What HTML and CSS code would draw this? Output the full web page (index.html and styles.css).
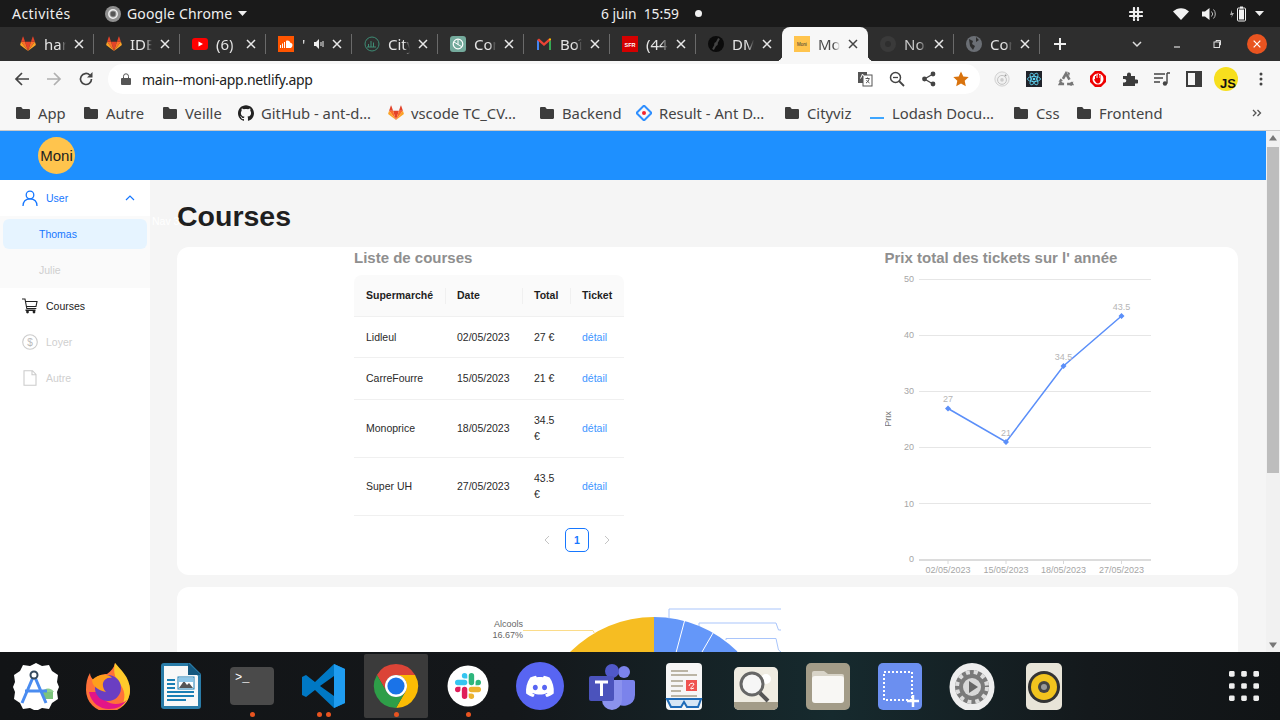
FILE: index.html
```html
<!DOCTYPE html>
<html lang="fr">
<head>
<meta charset="utf-8">
<title>Moni</title>
<link rel="stylesheet" href="styles.css">
</head>
<body>
<svg class="defs" aria-hidden="true">
  <symbol id="gitlab" viewBox="0 0 24 24">
    <path fill="#e24329" d="M12 22.5 16.4 8.5H7.6z"/>
    <path fill="#fc6d26" d="M12 22.5 7.6 8.5H1.6z"/>
    <path fill="#fc6d26" d="M12 22.5 16.4 8.5h6z"/>
    <path fill="#fca326" d="M1.6 8.5.3 12.7c-.1.4 0 .8.3 1L12 22.5z"/>
    <path fill="#fca326" d="M22.4 8.5l1.3 4.2c.1.4 0 .8-.3 1L12 22.5z"/>
    <path fill="#e24329" d="M1.6 8.5h6L5 1c-.1-.4-.7-.4-.8 0z"/>
    <path fill="#e24329" d="M22.4 8.5h-6L19 1c.1-.4.7-.4.8 0z"/>
  </symbol>
  <symbol id="folder" viewBox="0 0 16 16">
    <path fill="#3c3c3c" d="M1 3.2C1 2.5 1.5 2 2.2 2h4l1.6 2h6C14.5 4 15 4.5 15 5.2v7.6c0 .7-.5 1.2-1.2 1.2H2.2C1.500 14 1 13.500 1 12.800z"/>
  </symbol>
  <symbol id="x" viewBox="0 0 12 12">
    <path d="M2 2l8 8M10 2l-8 8" stroke="currentColor" stroke-width="1.500" fill="none"/>
  </symbol>
  <symbol id="github" viewBox="0 0 24 24">
    <path fill="#222" d="M12 .297c-6.63 0-12 5.373-12 12 0 5.303 3.438 9.8 8.205 11.385.6.113.82-.258.82-.577 0-.285-.01-1.04-.015-2.04-3.338.724-4.042-1.61-4.042-1.61C4.422 18.07 3.633 17.7 3.633 17.7c-1.087-.744.084-.729.084-.729 1.205.084 1.838 1.236 1.838 1.236 1.07 1.835 2.809 1.305 3.495.998.108-.776.417-1.305.76-1.605-2.665-.3-5.466-1.332-5.466-5.93 0-1.31.465-2.38 1.235-3.22-.135-.303-.54-1.523.105-3.176 0 0 1.005-.322 3.3 1.23.96-.267 1.98-.399 3-.405 1.02.006 2.04.138 3 .405 2.28-1.552 3.285-1.23 3.285-1.23.645 1.653.24 2.873.12 3.176.765.84 1.23 1.91 1.23 3.22 0 4.61-2.805 5.625-5.475 5.92.42.36.81 1.096.81 2.22 0 1.606-.015 2.896-.015 3.286 0 .315.21.69.825.57C20.565 22.092 24 17.592 24 12.297c0-6.627-5.373-12-12-12"/>
  </symbol>
  <symbol id="chrome" viewBox="0 0 24 24">
    <path fill="#db4437" d="M12 1A11 11 0 0 1 21.530 6.500H12A5.500 5.500 0 0 0 7.240 14.750L2.470 6.500A11 11 0 0 1 12 1z"/>
    <path fill="#fbbc04" d="M21.530 6.500A11 11 0 0 1 12 23L16.760 14.750A5.500 5.500 0 0 0 12 6.500z"/>
    <path fill="#2e9e48" d="M12 23A11 11 0 0 1 2.470 6.500L7.240 14.750A5.500 5.500 0 0 0 16.760 14.750z"/>
    <circle cx="12" cy="12" r="5.500" fill="#fff"/>
    <circle cx="12" cy="12" r="4.300" fill="#1a73e8"/>
  </symbol>
  <symbol id="slack" viewBox="0 0 24 24">
    <path fill="#e01e5a" d="M5.042 15.165a2.528 2.528 0 0 1-2.52 2.523A2.528 2.528 0 0 1 0 15.165a2.527 2.527 0 0 1 2.522-2.52h2.52v2.52zM6.313 15.165a2.527 2.527 0 0 1 2.521-2.52 2.527 2.527 0 0 1 2.521 2.52v6.313A2.528 2.528 0 0 1 8.834 24a2.528 2.528 0 0 1-2.521-2.522v-6.313z"/>
    <path fill="#36c5f0" d="M8.834 5.042a2.528 2.528 0 0 1-2.521-2.52A2.528 2.528 0 0 1 8.834 0a2.528 2.528 0 0 1 2.521 2.522v2.52H8.834zM8.834 6.313a2.528 2.528 0 0 1 2.521 2.521 2.528 2.528 0 0 1-2.521 2.521H2.522A2.528 2.528 0 0 1 0 8.834a2.528 2.528 0 0 1 2.522-2.521h6.312z"/>
    <path fill="#2eb67d" d="M18.956 8.834a2.528 2.528 0 0 1 2.522-2.521A2.528 2.528 0 0 1 24 8.834a2.528 2.528 0 0 1-2.522 2.521h-2.522V8.834zM17.688 8.834a2.528 2.528 0 0 1-2.523 2.521 2.527 2.527 0 0 1-2.52-2.521V2.522A2.527 2.527 0 0 1 15.165 0a2.528 2.528 0 0 1 2.523 2.522v6.312z"/>
    <path fill="#ecb22e" d="M15.165 18.956a2.528 2.528 0 0 1 2.523 2.522A2.528 2.528 0 0 1 15.165 24a2.527 2.527 0 0 1-2.52-2.522v-2.522h2.52zM15.165 17.688a2.527 2.527 0 0 1-2.52-2.523 2.526 2.526 0 0 1 2.52-2.52h6.313A2.527 2.527 0 0 1 24 15.165a2.528 2.528 0 0 1-2.522 2.523h-6.313z"/>
  </symbol>
</svg>

<div class="screen">
  <header class="topbar">
    <div class="top-left">
      <span class="activities">Activités</span>
      <span class="appmenu">
        <svg class="ic16" viewBox="0 0 16 16"><circle cx="8" cy="8" r="8" fill="#8f8f8f"/><circle cx="8" cy="8" r="4.200" fill="none" stroke="#eee" stroke-width="1.500"/><circle cx="8" cy="8" r="2.400" fill="#555"/></svg>
        <span class="appname">Google Chrome</span>
        <svg class="caret" viewBox="0 0 9 5"><path d="M0 0h9L4.500 5z" fill="#eee"/></svg>
      </span>
    </div>
    <div class="clock"><span>6 juin</span><span>15:59</span><i class="dot"></i></div>
    <div class="status">
      <svg class="slack-w" viewBox="0 0 14 14"><path d="M5 1v12M9 1v12M1 5h12M1 9h12" stroke="#eee" stroke-width="2.200" stroke-linecap="round" stroke-dasharray="4 1.500" fill="none"/></svg>
      <svg class="wifi" viewBox="0 0 16 12"><path d="M0 3.500C4.500-1 11.500-1 16 3.500L8 12z" fill="#f2f2f2"/></svg>
      <svg class="vol" viewBox="0 0 16 14"><path d="M1 4.500h3L8.500 1v12L4 9.500H1z" fill="#f2f2f2"/><path d="M10.500 4.500a3.500 3.500 0 0 1 0 5M12.500 2.500a6.500 6.500 0 0 1 0 9" stroke="#bbb" fill="none"/></svg>
      <svg class="batt" viewBox="0 0 18 16"><path d="M3 4 1 9h2L2 12l3-5H3z" fill="#aaa"/><rect x="8.500" y="2" width="8" height="13" rx="1" fill="none" stroke="#f2f2f2"/><rect x="11" y="0.500" width="3" height="2" fill="#f2f2f2"/><rect x="10" y="3.500" width="5" height="10" fill="#f2f2f2"/></svg>
      <svg class="caret" viewBox="0 0 9 5"><path d="M0 0h9L4.500 5z" fill="#eee"/></svg>
    </div>
  </header>

  <nav class="tabstrip">
    <div class="tab"><svg class="ic16"><use href="#gitlab"/></svg><span class="tab-title">har</span><svg class="tab-x"><use href="#x"/></svg></div>
    <div class="tab"><svg class="ic16"><use href="#gitlab"/></svg><span class="tab-title">IDE</span><svg class="tab-x"><use href="#x"/></svg></div>
    <div class="tab"><svg class="ic16" viewBox="0 0 16 16"><rect y="2" width="16" height="12" rx="3" fill="#f00"/><path d="M6.500 5.500v5L11 8z" fill="#fff"/></svg><span class="tab-title">(6) A</span><svg class="tab-x"><use href="#x"/></svg></div>
    <div class="tab"><svg class="ic16" viewBox="0 0 16 16"><rect width="16" height="16" fill="#f50"/><path d="M2 12V9h1v3zM4 12V7.500h1V12zM6 12V6h1v6zM8 12V5c2-1 4 0 4.500 2 2-.5 3 3 .5 5z" fill="#fff"/></svg><span class="tab-title tab-short">'</span><svg class="tab-audio" viewBox="0 0 12 12"><path d="M0 4h2l3-3v10L2 8H0z" fill="#eee"/><path d="M7 4v4M9 3v6" stroke="#eee"/></svg><svg class="tab-x"><use href="#x"/></svg></div>
    <div class="tab"><svg class="ic16" viewBox="0 0 16 16"><circle cx="8" cy="8" r="7" fill="none" stroke="#3e8c75"/><path d="M4.500 11V8M7 11V5M9.500 11V6.500M12 11H3" stroke="#3e8c75" fill="none"/></svg><span class="tab-title">City</span><svg class="tab-x"><use href="#x"/></svg></div>
    <div class="tab"><svg class="ic16" viewBox="0 0 16 16"><rect width="16" height="16" rx="3" fill="#74aa9c"/><circle cx="8" cy="8" r="4.800" fill="none" stroke="#fff" stroke-width="1.200"/><path d="M8 3.500v5l3.500 2M4 6l4 2.500" stroke="#fff" fill="none"/></svg><span class="tab-title">Con</span><svg class="tab-x"><use href="#x"/></svg></div>
    <div class="tab"><svg class="ic16" viewBox="0 0 16 16"><path d="M1 14V4l2 .5V14z" fill="#4285f4"/><path d="M13 14V4.500L15 4v10z" fill="#34a853"/><path d="M1 4l2-1.500L8 7l5-4.500L15 4l-7 6z" fill="#ea4335"/><path d="M13 4.500 15 4V2.500L13 2.500z" fill="#fbbc04"/></svg><span class="tab-title">Boî</span><svg class="tab-x"><use href="#x"/></svg></div>
    <div class="tab"><svg class="ic16" viewBox="0 0 16 16"><rect width="16" height="16" fill="#d40000"/><text class="sfr" x="8" y="10.500" text-anchor="middle">SFR</text></svg><span class="tab-title">(44</span><svg class="tab-x"><use href="#x"/></svg></div>
    <div class="tab tab-preactive"><svg class="ic16" viewBox="0 0 16 16"><circle cx="8" cy="8" r="8" fill="#0b0b0b"/><path d="M11 2.500 5 13.500" stroke="#444" stroke-width="2"/><circle cx="8" cy="8" r="1.800" fill="#444"/></svg><span class="tab-title">DM</span><svg class="tab-x"><use href="#x"/></svg></div>
    <div class="tab tab-active"><svg class="ic16" viewBox="0 0 16 16"><rect width="16" height="16" fill="#ffc44d"/><text class="moni-fav" x="8" y="9.500" text-anchor="middle">Moni</text></svg><span class="tab-title">Mo</span><svg class="tab-x"><use href="#x"/></svg></div>
    <div class="tab"><svg class="ic16" viewBox="0 0 16 16"><circle cx="8" cy="8" r="8" fill="#3a3a3a"/><circle cx="8" cy="8" r="3" fill="#2e2e2e"/></svg><span class="tab-title tab-dim">Nor</span><svg class="tab-x"><use href="#x"/></svg></div>
    <div class="tab"><svg class="ic16" viewBox="0 0 16 16"><circle cx="8" cy="8" r="8" fill="#6b6f75"/><path d="M3 3l4 2-1 3 3 2-2 4-3-4zM10 1l3 3-3 2z" fill="#2e2e2e"/></svg><span class="tab-title">Con</span><svg class="tab-x"><use href="#x"/></svg></div>
    <svg class="newtab" viewBox="0 0 14 14"><path d="M7 1v12M1 7h12" stroke="#eee" stroke-width="2" fill="none"/></svg>
    <div class="winctl">
      <svg class="win-ic" viewBox="0 0 12 12"><path d="M2 4l4 4 4-4" stroke="#ddd" stroke-width="1.500" fill="none"/></svg>
      <svg class="win-ic" viewBox="0 0 12 12"><path d="M3 9h6" stroke="#ddd" stroke-width="1.200" fill="none"/></svg>
      <svg class="win-ic" viewBox="0 0 12 12"><rect x="3" y="4" width="5.500" height="5.500" stroke="#ddd" fill="none"/><path d="M5 4V2.500h4.500V7H8.500" stroke="#ddd" fill="none"/></svg>
      <span class="win-close"><svg class="win-x"><use href="#x"/></svg></span>
    </div>
  </nav>

  <div class="toolbar">
    <svg class="tool" viewBox="0 0 16 16"><path d="M15 8H2M8 2 2 8l6 6" stroke="#444" stroke-width="1.700" fill="none"/></svg>
    <svg class="tool" viewBox="0 0 16 16"><path d="M1 8h13M8 2l6 6-6 6" stroke="#b0b0b0" stroke-width="1.700" fill="none"/></svg>
    <svg class="tool" viewBox="0 0 16 16"><path d="M13.500 8A5.500 5.500 0 1 1 11.800 4" stroke="#444" stroke-width="1.700" fill="none"/><path d="M14.500 1v5.500H9z" fill="#444"/></svg>
    <div class="omnibox">
      <svg class="lock" viewBox="0 0 10 12"><path d="M2.500 5V3.300a2.500 2.500 0 0 1 5 0V5" stroke="#555" fill="none"/><rect y="5" width="10" height="7" rx="1" fill="#555"/></svg>
      <span class="url">main--moni-app.netlify.app</span>
      <div class="omni-icons">
        <svg class="tool" viewBox="0 0 16 16"><rect x="1" y="1" width="9" height="11" fill="#555"/><rect x="6" y="4" width="9" height="11" fill="#fff" stroke="#555"/><path d="M8.500 7.500h4M10.500 6.500v1M9 12c2-1 3-3 3-4.500M9.500 9c.5 1 2 2.500 3 3" stroke="#555" fill="none"/><path d="M3.500 7.500 5.500 3l1 2" stroke="#fff" fill="none"/></svg>
        <svg class="tool" viewBox="0 0 16 16"><circle cx="6.500" cy="6.500" r="5" stroke="#444" stroke-width="1.500" fill="none"/><path d="M10 10l5 5" stroke="#444" stroke-width="1.800"/><path d="M4 6.500h5" stroke="#444" stroke-width="1.300"/></svg>
        <svg class="tool" viewBox="0 0 16 16"><circle cx="12" cy="3" r="2.400" fill="#444"/><circle cx="3.500" cy="8" r="2.400" fill="#444"/><circle cx="12" cy="13" r="2.400" fill="#444"/><path d="M12 3 3.500 8l8.500 5" stroke="#444" stroke-width="1.300" fill="none"/></svg>
        <svg class="tool star" viewBox="0 0 16 16"><path d="M8 .5l2.300 5 5.400.6-4 3.700 1.100 5.400L8 12.500l-4.800 2.700 1.100-5.400-4-3.700 5.400-.6z" fill="#d9730d"/></svg>
      </div>
    </div>
    <div class="ext-icons">
      <svg class="tool" viewBox="0 0 18 18"><circle cx="9" cy="9" r="8" fill="#f1f1f1" stroke="#ccc"/><circle cx="9" cy="10" r="5" fill="none" stroke="#bbb"/><circle cx="9" cy="10" r="2" fill="#ccc"/><circle cx="13" cy="5" r="1" fill="#999"/></svg>
      <svg class="tool" viewBox="0 0 16 16"><rect width="16" height="16" fill="#20232a"/><g fill="none" stroke="#61dafb" stroke-width=".8"><ellipse cx="8" cy="8" rx="6.500" ry="2.600"/><ellipse cx="8" cy="8" rx="6.500" ry="2.600" transform="rotate(60 8 8)"/><ellipse cx="8" cy="8" rx="6.500" ry="2.600" transform="rotate(120 8 8)"/></g><circle cx="8" cy="8" r="1.300" fill="#61dafb"/></svg>
      <svg class="tool" viewBox="0 0 16 16"><path d="M8 2.500 14 13H2z" fill="none" stroke="#777" stroke-width="2.600" stroke-dasharray="7 3"/><path d="M9 .5l3 1.500-1 3.500zM15.500 10.500l-2 4.500-3-1.500zM.5 11l2-3.500 2.500 2z" fill="#777"/></svg>
      <svg class="tool" viewBox="0 0 16 16"><path d="M5 0h6l5 5v6l-5 5H5l-5-5V5z" fill="#e00"/><circle cx="8" cy="8" r="5.500" fill="#fff"/><path d="M5 8V5h1v2h.5V3.500h1V7H8V3h1v4h.5V4h1v5.500c0 1.500-1 3-2.500 3S5.500 11 4 8.500z" fill="#e00"/></svg>
      <svg class="tool" viewBox="0 0 16 16"><path d="M1 5h4V3.500a2 2 0 0 1 4 0V5h4v3.500h1.500a2 2 0 0 1 0 4H13V15H1v-3.500h1.500a1.800 1.800 0 0 0 0-3.600H1z" fill="#3c3c3c"/></svg>
      <svg class="tool" viewBox="0 0 16 16"><path d="M0 3h11M0 7h9M0 11h6" stroke="#444" stroke-width="1.400"/><path d="M13 2v10.500M13 2h3" stroke="#444" stroke-width="1.400" fill="none"/><circle cx="11" cy="12.500" r="2.200" fill="#444"/></svg>
      <svg class="tool" viewBox="0 0 16 16"><path d="M1 1h14v14H1z" fill="none" stroke="#3c3c3c" stroke-width="2"/><rect x="9" y="2" width="5" height="12" fill="#3c3c3c"/></svg>
      <span class="avatar">JS</span>
      <svg class="tool" viewBox="0 0 16 16"><circle cx="8" cy="3" r="1.500" fill="#444"/><circle cx="8" cy="8" r="1.500" fill="#444"/><circle cx="8" cy="13" r="1.500" fill="#444"/></svg>
    </div>
  </div>

  <div class="bookmarks">
    <span class="bm"><svg class="ic16"><use href="#folder"/></svg>App</span>
    <span class="bm"><svg class="ic16"><use href="#folder"/></svg>Autre</span>
    <span class="bm"><svg class="ic16"><use href="#folder"/></svg>Veille</span>
    <span class="bm"><svg class="ic16"><use href="#github"/></svg>GitHub - ant-d…</span>
    <span class="bm"><svg class="ic16"><use href="#gitlab"/></svg>vscode TC_CV…</span>
    <span class="bm"><svg class="ic16"><use href="#folder"/></svg>Backend</span>
    <span class="bm"><svg class="ic16" viewBox="0 0 16 16"><path d="M8 .5 15.500 8 8 15.500.5 8z" fill="none" stroke="#2f8fff" stroke-width="2"/><circle cx="8" cy="8" r="2" fill="#f5222d"/></svg>Result - Ant D…</span>
    <span class="bm"><svg class="ic16"><use href="#folder"/></svg>Cityviz</span>
    <span class="bm"><svg class="ic16" viewBox="0 0 16 16"><path d="M1 13h14" stroke="#3ea6ff" stroke-width="2"/></svg>Lodash Docu…</span>
    <span class="bm"><svg class="ic16"><use href="#folder"/></svg>Css</span>
    <span class="bm"><svg class="ic16"><use href="#folder"/></svg>Frontend</span>
    <svg class="bm-more" viewBox="0 0 10 10"><path d="M1 2l3 3-3 3M5.500 2l3 3-3 3" stroke="#555" stroke-width="1.300" fill="none"/></svg>
  </div>

  <div class="page">
    <div class="app">
      <div class="app-header"><span class="logo">Moni</span></div>
      <div class="app-body">
        <aside class="sider">
          <div class="menu-item menu-open">
            <svg class="menu-ic" viewBox="0 0 16 16"><circle cx="8" cy="5" r="3.800" fill="none" stroke="#1677ff" stroke-width="1.300"/><path d="M1 16c0-4.500 2.500-7.200 7-7.200s7 2.700 7 7.200" fill="none" stroke="#1677ff" stroke-width="1.300"/></svg>
            <span>User</span>
            <svg class="chev" viewBox="0 0 10 6"><path d="M1 5l4-4 4 4" fill="none" stroke="#1677ff" stroke-width="1.200"/></svg>
          </div>
          <div class="submenu">
            <div class="sub-item sub-active">Thomas</div>
            <div class="sub-item sub-muted">Julie</div>
          </div>
          <div class="menu-item">
            <svg class="menu-ic" viewBox="0 0 16 16"><path d="M0 1h3l1.800 9.500h9.500" fill="none" stroke="#222" stroke-width="1.100"/><path d="M3.500 3.500H15l-1 5H4.500" fill="none" stroke="#222" stroke-width="1.100"/><rect x="3.500" y="11.500" width="10" height="1.500" fill="#222"/><circle cx="5.500" cy="14" r="1.400" fill="#222"/><circle cx="12" cy="14" r="1.400" fill="#222"/></svg>
            <span>Courses</span>
          </div>
          <div class="menu-item menu-muted">
            <svg class="menu-ic" viewBox="0 0 16 16"><circle cx="8" cy="8" r="7.300" fill="none" stroke="#ccc" stroke-width="1.100"/><text class="dollar" x="8" y="11.500" text-anchor="middle">$</text></svg>
            <span>Loyer</span>
          </div>
          <div class="menu-item menu-muted">
            <svg class="menu-ic" viewBox="0 0 16 16"><path d="M2 .7h8.500L14 4.500v10.800H2zM10 .7v4h4" fill="none" stroke="#ccc" stroke-width="1.100"/></svg>
            <span>Autre</span>
          </div>
        </aside>
        <main class="main">
          <span class="ghost">Nav 3</span>
          <h1 class="page-title">Courses</h1>
          <section class="card card-top">
            <div class="col">
              <h2 class="col-title">Liste de courses</h2>
              <table class="tbl">
                <thead>
                  <tr><th class="c1">Supermarché</th><th class="c2">Date</th><th class="c3">Total</th><th class="c4">Ticket</th></tr>
                </thead>
                <tbody>
                  <tr><td>Lidleul</td><td>02/05/2023</td><td>27 €</td><td><a class="lnk">détail</a></td></tr>
                  <tr><td>CarreFourre</td><td>15/05/2023</td><td>21 €</td><td><a class="lnk">détail</a></td></tr>
                  <tr><td>Monoprice</td><td>18/05/2023</td><td>34.5 €</td><td><a class="lnk">détail</a></td></tr>
                  <tr><td>Super UH</td><td>27/05/2023</td><td>43.5 €</td><td><a class="lnk">détail</a></td></tr>
                </tbody>
              </table>
              <div class="pager">
                <svg class="pg-arrow" viewBox="0 0 8 10"><path d="M6 1 2 5l4 4" fill="none" stroke="#c4c4c4"/></svg>
                <span class="pg-num">1</span>
                <svg class="pg-arrow" viewBox="0 0 8 10"><path d="M2 1l4 4-4 4" fill="none" stroke="#c4c4c4"/></svg>
              </div>
            </div>
            <div class="col">
              <h2 class="col-title">Prix total des tickets sur l' année</h2>
              <svg class="chart" viewBox="884 275 270 300">
                <g class="grid">
                  <path d="M918 279.500h232M918 335.500h232M918 391.500h232M918 447.500h232M918 503.500h232"/>
                </g>
                <path class="axis" d="M918 560h232"/>
                <path class="ticks" d="M947 560v4M1005 560v4M1062.500 560v4M1120.500 560v4"/>
                <g class="ylab" text-anchor="end">
                  <text x="913" y="282">50</text><text x="913" y="338">40</text><text x="913" y="394">30</text><text x="913" y="450">20</text><text x="913" y="507">10</text><text x="913" y="562">0</text>
                </g>
                <g class="ylab" text-anchor="middle">
                  <text x="947" y="573">02/05/2023</text><text x="1005" y="573">15/05/2023</text><text x="1062.500" y="573">18/05/2023</text><text x="1120.500" y="573">27/05/2023</text>
                </g>
                <text class="axis-name" transform="translate(890 419) rotate(-90)" text-anchor="middle">Prix</text>
                <polyline class="line" points="947,408.500 1005,442 1062.500,366 1120.500,316"/>
                <path class="mark" d="M947 405.500l3 3-3 3-3-3zM1005 439l3 3-3 3-3-3zM1062.500 363l3 3-3 3-3-3zM1120.500 313l3 3-3 3-3-3z"/>
                <g class="dlab" text-anchor="middle">
                  <text x="947" y="402">27</text><text x="1005" y="436">21</text><text x="1062.500" y="360">34.5</text><text x="1120.500" y="310">43.5</text>
                </g>
              </svg>
            </div>
          </section>
          <section class="card card-pie">
            <svg class="pie" viewBox="177 587 1061 200">
              <path class="pie-y" d="M654 735V617A118 118 0 0 0 536 735z"/>
              <path class="pie-b" d="M654 735V617A118 118 0 0 1 772 735z"/>
              <path class="pie-sep" d="M654 735 684.500 621M654 735 713 633M654 735 737.500 651.500"/>
              <path class="lead-y" d="M523 630.500h70l1.500 3"/>
              <path class="lead-b" d="M669 618.500V609H781M699 626V623H776L778.500 630H781M726 640V638.500H776L778.500 650 781 652"/>
              <g class="pie-lab" text-anchor="end"><text x="523" y="627">Alcools</text><text x="523" y="638">16.67%</text></g>
            </svg>
          </section>
        </main>
      </div>
    </div>
    <div class="scrollbar">
      <svg class="sb-arrow" viewBox="0 0 14 16"><path d="M3 9.500 7 4l4 5.500z" fill="#777"/></svg>
      <div class="sb-thumb"></div>
      <svg class="sb-arrow sb-down" viewBox="0 0 14 16"><path d="M3 6.500 7 12l4-5.500z" fill="#777"/></svg>
    </div>
  </div>

  <footer class="dock">
    <div class="dock-item">
      <svg class="dock-ic" viewBox="0 0 48 48"><path d="M24 1l6 3 7-1 3 6 6 4-1 7 2 5-2 5 1 7-6 4-3 6-7-1-6 3-6-3-7 1-3-6-6-4 1-7-2-5 2-5-1-7 6-4 3-6 7 1z" fill="#fff"/><path d="M30 30a7 7 0 0 1 12 0z" fill="#8ecf8e"/><rect x="31" y="30" width="10" height="7" fill="#7cc47c"/><path d="M22 13 10 41M22 13l12 28M13 29h22" stroke="#4a8cf0" stroke-width="3" fill="none"/><circle cx="22" cy="13" r="3.500" fill="#fff" stroke="#34495e" stroke-width="2"/></svg>
    </div>
    <div class="dock-item">
      <svg class="dock-ic" viewBox="0 0 48 48"><path d="M31 1c4 5 2 8 6 11 6 5 9 11 9 16a22 22 0 0 1-44 0c0-7 1-12 4-17 0 3 2 6 4 7 3-4 8-6 13-6 4-3 7-6 8-11z" fill="#ff7139"/><path d="M31 1c5 6 15 14 15 27 0 8-4 14-9 17 5-7 5-18-3-25-3-4-5-11-3-19z" fill="#ffca2b"/><path d="M5 30c2 11 11 17 20 17 8 0 14-3 18-9-8 7-24 5-27-8z" fill="#e31587"/><circle cx="24" cy="26" r="13" fill="#6a3ec2"/><path d="M8 18c6-6 16-7 20-2-4-1-8 1-9 5-1 5 3 9 3 9-8-2-14-6-14-12z" fill="#ff9f1c"/></svg>
    </div>
    <div class="dock-item">
      <svg class="dock-ic" viewBox="0 0 48 48"><path d="M5 4a3 3 0 0 1 3-3h26l11 11v32a3 3 0 0 1-3 3H8a3 3 0 0 1-3-3z" fill="#2a7ca8"/><path d="M8 4h24l10 10v30H8z" fill="#f8f8f8"/><path d="M32 1l13 12H32z" fill="#14587f"/><g fill="#1a7fb5"><rect x="11" y="17" width="8" height="2"/><rect x="11" y="21" width="8" height="2"/><rect x="11" y="25" width="8" height="2"/><rect x="11" y="29" width="27" height="2"/><rect x="11" y="33" width="27" height="2"/><rect x="11" y="37" width="19" height="2"/></g><rect x="22" y="15" width="16" height="12" fill="#fff" stroke="#1a7fb5"/><path d="M23 26l5-7 3 4 2-2 4 5z" fill="#555"/><rect x="23" y="16" width="14" height="4" fill="#8ec7e8"/></svg>
    </div>
    <div class="dock-item">
      <svg class="dock-ic" viewBox="0 0 48 48"><rect x="2" y="5" width="44" height="38" rx="4" fill="#4a4a4a"/><text class="term" x="7" y="19">&gt;_</text></svg>
      <i class="run run-1"></i>
    </div>
    <div class="dock-item">
      <svg class="dock-ic" viewBox="0 0 48 48"><path d="M34 2 45 7v34l-11 5-19-18-9 7-4-2V15l4-2 9 7z" fill="#0078c4"/><path d="M34 2 45 7v34l-11 5z" fill="#1f9cf0"/><path d="M34 14 20 24l14 10z" fill="#111416"/></svg>
      <i class="run run-2a"></i><i class="run run-2b"></i>
    </div>
    <div class="dock-item dock-active">
      <svg class="dock-ic"><use href="#chrome"/></svg>
      <i class="run run-1"></i>
    </div>
    <div class="dock-item">
      <svg class="dock-ic" viewBox="0 0 48 48"><circle cx="24" cy="24" r="20.500" fill="#fff"/><svg x="11" y="11" width="26" height="26"><use href="#slack"/></svg></svg>
      <i class="run run-1"></i>
    </div>
    <div class="dock-item">
      <svg class="dock-ic" viewBox="0 0 48 48"><circle cx="24" cy="24" r="24" fill="#5865f2"/><g transform="translate(10 10.500) scale(1.160)"><path fill="#fff" d="M20.317 4.370a19.790 19.790 0 0 0-4.885-1.515.074.074 0 0 0-.079.037c-.211.375-.445.865-.608 1.250-1.845-.276-3.680-.276-5.487 0-.164-.393-.406-.874-.618-1.250a.077.077 0 0 0-.079-.037 19.740 19.740 0 0 0-4.885 1.515.070.070 0 0 0-.032.028C.533 9.046-.319 13.580.099 18.058a.082.082 0 0 0 .031.056c2.053 1.508 4.041 2.423 5.993 3.030a.078.078 0 0 0 .084-.028c.462-.630.873-1.295 1.226-1.994a.076.076 0 0 0-.042-.106c-.653-.248-1.274-.550-1.872-.892a.077.077 0 0 1-.008-.128c.126-.094.252-.192.372-.291a.074.074 0 0 1 .078-.011c3.928 1.793 8.180 1.793 12.061 0a.074.074 0 0 1 .079.010c.120.099.246.198.373.292a.077.077 0 0 1-.007.128 12.300 12.300 0 0 1-1.873.891.077.077 0 0 0-.041.107c.360.698.772 1.363 1.225 1.993a.076.076 0 0 0 .084.029c1.961-.607 3.950-1.522 6.002-3.029a.077.077 0 0 0 .031-.055c.500-5.177-.838-9.674-3.548-13.660a.061.061 0 0 0-.031-.029zM8.020 15.331c-1.183 0-2.157-1.086-2.157-2.419s.956-2.419 2.157-2.419c1.211 0 2.176 1.095 2.157 2.419 0 1.333-.956 2.419-2.157 2.419zm7.975 0c-1.183 0-2.157-1.086-2.157-2.419s.955-2.419 2.157-2.419c1.211 0 2.176 1.095 2.157 2.419 0 1.333-.946 2.419-2.157 2.419z"/></g></svg>
    </div>
    <div class="dock-item">
      <svg class="dock-ic" viewBox="0 0 48 48"><circle cx="36" cy="10" r="6" fill="#7b83eb"/><circle cx="24" cy="9" r="7" fill="#5059c9"/><path d="M27 18h18a2 2 0 0 1 2 2v13a11 11 0 0 1-20 6z" fill="#7b83eb"/><path d="M14 18h20v20a10 10 0 0 1-20 0z" fill="#8b92ee"/><rect x="1" y="14" width="25" height="25" rx="2" fill="#4b53bc"/><path d="M7 20h13M13.500 20v14" stroke="#fff" stroke-width="3" fill="none"/></svg>
    </div>
    <div class="dock-item">
      <svg class="dock-ic" viewBox="0 0 48 48"><rect x="6" y="1" width="36" height="47" rx="4" fill="#f6f6f6"/><path d="M11 9h17M11 13h26M11 19h12M11 24h12M11 29h10M11 34h26" stroke="#bbb5a5" stroke-width="2"/><rect x="26" y="18" width="11" height="11" fill="#ef5350"/><path d="M29 24a3 3 0 0 1 5-2c-1 3-4 3-3 5l3-1" stroke="#fff" fill="none"/><path d="M7 37h34l-3 8h-11l-3-5-3 5H11z" fill="#d6e6f5" stroke="#1e6bb8" stroke-width="2"/></svg>
    </div>
    <div class="dock-item">
      <svg class="dock-ic" viewBox="0 0 48 48"><rect x="2" y="5" width="44" height="43" rx="5" fill="#efece2"/><path d="M2 40h44v3a5 5 0 0 1-5 5H7a5 5 0 0 1-5-5z" fill="#a39c88"/><circle cx="34" cy="17" r="5" fill="#fff"/><circle cx="20" cy="22" r="11" fill="#f6f6f6" stroke="#666" stroke-width="3"/><path d="M28 31l8 8" stroke="#555" stroke-width="4"/></svg>
    </div>
    <div class="dock-item">
      <svg class="dock-ic" viewBox="0 0 48 48"><rect x="2" y="1" width="44" height="47" rx="5" fill="#a39c88"/><path d="M8 11a2 2 0 0 1 2-2h10l4 3h14a2 2 0 0 1 2 2v4H8z" fill="#d8d4c8"/><rect x="8" y="14" width="32" height="27" rx="3" fill="#f8f7f4"/></svg>
    </div>
    <div class="dock-item">
      <svg class="dock-ic" viewBox="0 0 48 48"><rect x="2" y="1" width="44" height="47" rx="5" fill="#6b8ff0"/><rect x="8" y="10" width="28" height="28" fill="none" stroke="#fff" stroke-width="2" stroke-dasharray="2 2"/><path d="M37 33v12M31 39h12" stroke="#fff" stroke-width="2.500"/></svg>
    </div>
    <div class="dock-item">
      <svg class="dock-ic" viewBox="0 0 48 48"><ellipse cx="24" cy="25" rx="22.500" ry="24" fill="#eee"/><circle cx="24" cy="25" r="17" fill="#7a7a7a"/><circle cx="24" cy="25" r="15" fill="none" stroke="#ddd" stroke-width="4" stroke-dasharray="4 4"/><circle cx="24" cy="25" r="9" fill="#d8d8d8"/><path d="M21 19v12l9-6z" fill="#666"/></svg>
    </div>
    <div class="dock-item">
      <svg class="dock-ic" viewBox="0 0 48 48"><rect x="6" y="1" width="36" height="47" rx="5" fill="#e8e4d8"/><circle cx="24" cy="25" r="16" fill="#333"/><circle cx="24" cy="25" r="13" fill="#f2c41e"/><circle cx="24" cy="25" r="6" fill="#444"/><circle cx="24" cy="25" r="3" fill="#999"/></svg>
    </div>
    <svg class="apps-grid" viewBox="0 0 32 32"><g fill="#eee"><rect y="0" width="6" height="6" rx="1.500"/><rect x="13" width="6" height="6" rx="1.500"/><rect x="26" width="6" height="6" rx="1.500"/><rect y="13" width="6" height="6" rx="1.500"/><rect x="13" y="13" width="6" height="6" rx="1.500"/><rect x="26" y="13" width="6" height="6" rx="1.500"/><rect y="26" width="6" height="6" rx="1.500"/><rect x="13" y="26" width="6" height="6" rx="1.500"/><rect x="26" y="26" width="6" height="6" rx="1.500"/></g></svg>
  </footer>
</div>
</body>
</html>
```

FILE: styles.css
```css
* { box-sizing: border-box; }
html, body { margin: 0; padding: 0; height: 100%; overflow: hidden; }
body { font-family: "Liberation Sans", Arial, sans-serif; background: #111; }
.defs { position: absolute; width: 0; height: 0; }
.screen { width: 1280px; height: 720px; display: flex; flex-direction: column; overflow: hidden; }
.ic16 { width: 16px; height: 16px; flex: none; display: block; }

/* GNOME bar */
.topbar { height: 27px; flex: none; background: #1a1a1a; color: #f0f0f0; display: flex; align-items: center; font: 14px "Noto Sans", sans-serif; }
.top-left { width: 601px; flex: none; display: flex; align-items: center; padding-left: 12px; }
.activities { width: 93px; letter-spacing: .45px; }
.appname { letter-spacing: .15px; }
.appmenu { display: flex; align-items: center; gap: 6px; }
.caret { width: 9px; height: 5px; display: block; }
.clock { display: flex; align-items: center; gap: 7px; font-size: 13.800px; }
.dot { width: 7px; height: 7px; border-radius: 50%; background: #f2f2f2; margin-left: 9px; }
.status { margin-left: auto; display: flex; align-items: center; padding-right: 16px; }
.slack-w { width: 14px; height: 14px; margin-right: 30px; }
.wifi { width: 16px; height: 12px; margin-right: 12px; }
.vol { width: 16px; height: 14px; margin-right: 12px; }
.batt { width: 18px; height: 16px; margin-right: 8px; }

/* tabs */
.tabstrip { height: 34px; flex: none; background: #2e2e2e; display: flex; align-items: center; padding-left: 8px; color: #e4e4e4; font: 15px "Noto Sans", sans-serif; }
.tab { position: relative; width: 86px; height: 34px; flex: none; display: flex; align-items: center; padding-left: 12px; }
.tab::after { content: ""; position: absolute; right: 0; top: 7px; height: 20px; width: 1px; background: #6a6a6a; }
.tab-title { width: 22px; margin-left: 8px; overflow: hidden; white-space: nowrap; flex: none; -webkit-mask-image: linear-gradient(90deg, #000 70%, transparent); mask-image: linear-gradient(90deg, #000 70%, transparent); }
.tab-short { width: 6px; }
.tab-dim { color: #c8c8c8; }
.tab-audio { width: 12px; height: 12px; margin-left: 6px; flex: none; }
.tab-x { width: 12px; height: 12px; position: absolute; left: 65px; top: 11px; color: #e8e8e8; }
.tab-active { background: #f7f7f7; color: #4a4a4a; border-radius: 8px 8px 0 0; }
.tab-active .tab-x { color: #444; }
.tab-preactive::after { display: none; }
.tab-active::before { content: ""; position: absolute; left: -6px; bottom: 0; width: 6px; height: 6px; background: radial-gradient(circle at 0 0, transparent 6px, #f7f7f7 6.500px); }
.tab-active::after { right: -6px; left: auto; top: auto; bottom: 0; width: 6px; height: 6px; background: radial-gradient(circle at 100% 0, transparent 6px, #f7f7f7 6.500px); }
.moni-fav { font: 4.500px "Liberation Sans", sans-serif; fill: #333; }
.sfr { font: bold 5.500px "Liberation Sans", sans-serif; fill: #fff; }
.newtab { width: 14px; height: 14px; margin-left: 13px; flex: none; }
.winctl { margin-left: auto; display: flex; align-items: center; gap: 28px; padding-right: 13px; }
.win-ic { width: 12px; height: 12px; display: block; }
.win-close { width: 20px; height: 20px; margin-left: -4px; border-radius: 50%; background: #e95420; display: flex; align-items: center; justify-content: center; color: #fff; }
.win-x { width: 10px; height: 10px; }

/* toolbar */
.toolbar { height: 36px; flex: none; background: #f7f7f7; display: flex; align-items: center; padding-left: 14px; }
.tool { width: 16px; height: 16px; flex: none; display: block; margin-right: 16px; }
.omnibox { width: 872px; height: 30px; margin-left: -2px; border-radius: 15px; background: #fff; display: flex; align-items: center; padding-left: 13px; flex: none; }
.lock { width: 10px; height: 12px; flex: none; margin-right: 11px; }
.url { font: 14px "Noto Sans", sans-serif; letter-spacing: -.3px; color: #222; }
.omni-icons { margin-left: auto; display: flex; align-items: center; padding-right: 1px; }
.star { margin-right: 10px; }
.ext-icons { display: flex; align-items: center; margin-left: 14px; }
.avatar { width: 24px; height: 24px; flex: none; border-radius: 50%; background: #f7df1e; color: #111; font: bold 13px/1 "Liberation Sans", sans-serif; display: flex; align-items: flex-end; justify-content: flex-end; padding: 0 2px 1px 0; margin-right: 15px; margin-left: -4px; }

/* bookmarks */
.bookmarks { height: 34px; flex: none; background: #f7f7f7; border-bottom: 1px solid #c9c9c9; display: grid; grid-template-columns: 68px 79px 76px 150px 151px 97px 148px 85px 144px 63px 1fr auto; align-items: center; padding: 0 0 2px 15px; font: 14.800px "Noto Sans", sans-serif; color: #444; }
.bm { display: flex; align-items: center; gap: 7px; white-space: nowrap; }
.bm-more { width: 10px; height: 10px; margin-right: 18px; }

/* app */
.page { flex: 1; min-height: 0; display: flex; background: #f5f5f5; }
.app { flex: 1; min-width: 0; display: flex; flex-direction: column; }
.app-header { height: 49px; flex: none; background: #1e90ff; display: flex; align-items: center; padding-left: 38px; }
.logo { width: 37px; height: 37px; border-radius: 50%; background: #ffc44d; color: #222; font-size: 15px; display: flex; align-items: center; justify-content: center; }
.app-body { flex: 1; min-height: 0; display: flex; }
.sider { width: 150px; flex: none; background: #fff; font-size: 10.500px; color: #222; }
.menu-item { height: 36px; display: flex; align-items: center; padding-left: 22px; position: relative; }
.menu-ic { width: 16px; height: 16px; flex: none; margin-right: 8px; }
.menu-open { color: #1677ff; }
.menu-muted { color: #cfcfcf; }
.chev { width: 10px; height: 6px; position: absolute; left: 125px; top: 15px; }
.dollar { font: 10px "Liberation Sans", sans-serif; fill: #bbb; }
.submenu { background: #fafafa; height: 72px; display: flex; flex-direction: column; }
.sub-item { height: 36px; flex: none; display: flex; align-items: center; padding-left: 39px; }
.sub-active { height: 30px; margin: 3px 3px; padding-left: 36px; background: #e6f4ff; color: #1677ff; border-radius: 6px; }
.sub-muted { color: #cfcfcf; }

.main { flex: 1; min-width: 0; position: relative; overflow: hidden; padding: 20px 28px 0 27px; }
.ghost { position: absolute; left: 2px; top: 35px; color: #fff; font-size: 10.500px; }
.page-title { margin: 0 0 15px; font-size: 28.500px; line-height: 32px; font-weight: bold; color: #1f1f1f; }
.card { background: #fff; border-radius: 12px; overflow: hidden; }
.card-top { height: 328px; display: grid; grid-template-columns: 1fr 1fr; margin-bottom: 12px; }
.col { padding-left: 177px; min-width: 0; }
.col-title { margin: 0 0 7px; padding-top: 1px; font-size: 15px; line-height: 20px; font-weight: bold; color: #8f8f8f; }

.tbl { width: 270px; table-layout: fixed; border-collapse: separate; border-spacing: 0; font-size: 10.500px; line-height: 16.500px; color: #2a2a2a; }
.tbl th, .tbl td { padding: 12px; text-align: left; border-bottom: 1px solid #f0f0f0; }
.tbl th { position: relative; background: #fafafa; font-weight: bold; color: #1f1f1f; }
.tbl th:first-child { border-top-left-radius: 8px; }
.tbl th:last-child { border-top-right-radius: 8px; }
.tbl th + th::before { content: ""; position: absolute; left: 0; top: 13px; height: 16px; width: 1px; background: #f0f0f0; }
.c1 { width: 91px; }
.c2 { width: 77px; }
.c3 { width: 48px; }
.c4 { width: 54px; }
.lnk { color: #4096ff; }
.pager { width: 270px; display: flex; align-items: center; justify-content: flex-end; margin-top: 12px; font-size: 10.500px; padding-right: 13px; }
.pg-arrow { width: 8px; height: 10px; }
.pg-num { width: 24px; height: 24px; margin: 0 14px; border: 1px solid #1677ff; border-radius: 5px; color: #1677ff; font-weight: bold; display: flex; align-items: center; justify-content: center; }

.chart { display: block; width: 270px; height: 300px; }
.grid path { stroke: #e6e6e6; fill: none; }
.axis { stroke: #d0d0d0; stroke-width: 1.500; fill: none; }
.ticks { stroke: #d8d8d8; fill: none; }
.ylab text { font-size: 9px; fill: #a6a6a6; }
.axis-name { font-size: 9px; fill: #777; }
.line { fill: none; stroke: #5b8ff9; stroke-width: 1.500; }
.mark { fill: #5b8ff9; }
.dlab text { font-size: 9px; fill: #b5b5b5; }

.card-pie { height: 200px; }
.pie { display: block; width: 1061px; height: 200px; }
.pie-y { fill: #f6bd22; }
.pie-b { fill: #6497f9; }
.pie-sep { stroke: #fff; fill: none; }
.lead-y { stroke: #fbdc8a; fill: none; }
.lead-b { stroke: #a9c5fb; fill: none; }
.pie-lab text { font-size: 9px; fill: #666; }

.scrollbar { width: 14px; flex: none; background: #f1f1f1; display: flex; flex-direction: column; align-items: center; }
.sb-arrow { width: 14px; height: 16px; flex: none; display: block; }
.sb-thumb { width: 12px; height: 326px; background: #bdbdbd; flex: none; }
.sb-down { margin-top: auto; }

/* dock */
.dock { height: 68px; flex: none; display: flex; align-items: center; gap: 24px; padding-left: 12px; background: linear-gradient(90deg, #121416 0%, #14171a 40%, #162a2e 65%, #14191c 85%, #111416 100%); }
.dock-item { position: relative; width: 48px; height: 48px; flex: none; }
.dock-ic { width: 48px; height: 48px; display: block; }
.dock-active::before { content: ""; position: absolute; left: -8px; top: -8px; width: 64px; height: 64px; background: #3b3b3b; border-radius: 2px; }
.dock-active .dock-ic { position: relative; }
.term { font: 12px "Liberation Mono", monospace; fill: #fff; }
.run { position: absolute; bottom: -7px; width: 5px; height: 5px; border-radius: 50%; background: #e95420; }
.run-1 { left: 22px; }
.run-2a { left: 17px; }
.run-2b { left: 26px; }
.apps-grid { width: 30px; height: 30px; margin-left: 137px; flex: none; }
```
